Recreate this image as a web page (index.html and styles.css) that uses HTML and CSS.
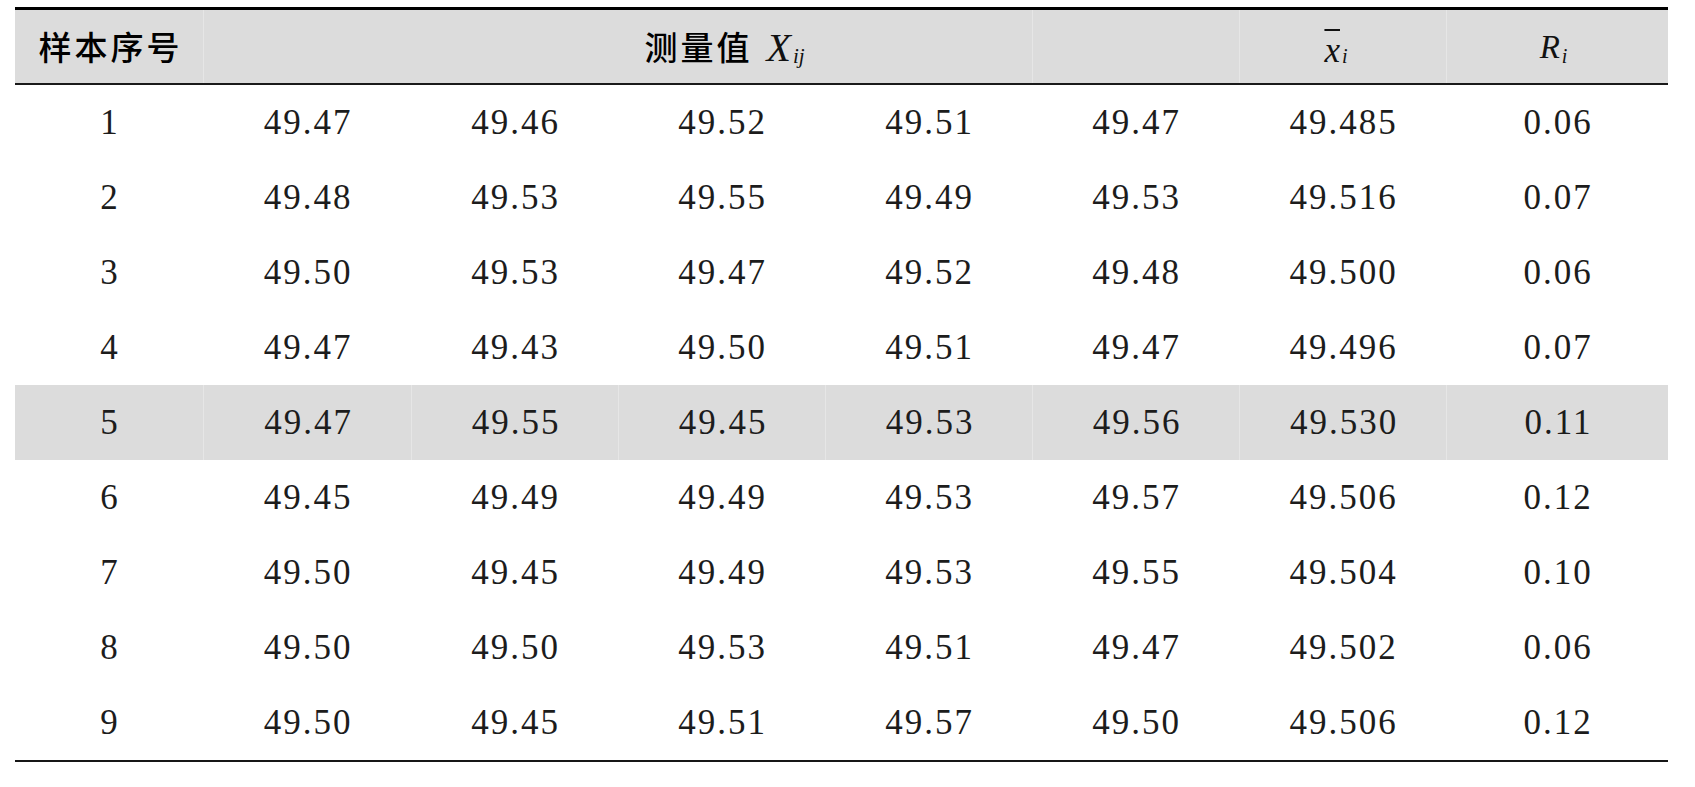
FILE: index.html
```html
<!DOCTYPE html>
<html lang="zh">
<head>
<meta charset="utf-8">
<title>测量值</title>
<link rel="stylesheet" href="styles.css">
</head>
<body>
<div class="table">
  <div class="row head">
    <div class="hc c1 cjk">样本序号</div>
    <div class="hc cspan"><span class="cjk">测量值</span><span class="math big">X</span><span class="math sub">ij</span></div>
    <div class="hc c6 div"></div>
    <div class="hc c7 div"><span class="math xbar">x</span><span class="math sub2">i</span></div>
    <div class="hc c8 div"><span class="math rr">R</span><span class="math sub2">i</span></div>
  </div>
  <div class="row"><div class="cell">1</div><div class="cell">49.47</div><div class="cell">49.46</div><div class="cell">49.52</div><div class="cell">49.51</div><div class="cell">49.47</div><div class="cell">49.485</div><div class="cell">0.06</div></div>
  <div class="row"><div class="cell">2</div><div class="cell">49.48</div><div class="cell">49.53</div><div class="cell">49.55</div><div class="cell">49.49</div><div class="cell">49.53</div><div class="cell">49.516</div><div class="cell">0.07</div></div>
  <div class="row"><div class="cell">3</div><div class="cell">49.50</div><div class="cell">49.53</div><div class="cell">49.47</div><div class="cell">49.52</div><div class="cell">49.48</div><div class="cell">49.500</div><div class="cell">0.06</div></div>
  <div class="row"><div class="cell">4</div><div class="cell">49.47</div><div class="cell">49.43</div><div class="cell">49.50</div><div class="cell">49.51</div><div class="cell">49.47</div><div class="cell">49.496</div><div class="cell">0.07</div></div>
  <div class="row shade"><div class="cell">5</div><div class="cell">49.47</div><div class="cell">49.55</div><div class="cell">49.45</div><div class="cell">49.53</div><div class="cell">49.56</div><div class="cell">49.530</div><div class="cell">0.11</div></div>
  <div class="row"><div class="cell">6</div><div class="cell">49.45</div><div class="cell">49.49</div><div class="cell">49.49</div><div class="cell">49.53</div><div class="cell">49.57</div><div class="cell">49.506</div><div class="cell">0.12</div></div>
  <div class="row"><div class="cell">7</div><div class="cell">49.50</div><div class="cell">49.45</div><div class="cell">49.49</div><div class="cell">49.53</div><div class="cell">49.55</div><div class="cell">49.504</div><div class="cell">0.10</div></div>
  <div class="row"><div class="cell">8</div><div class="cell">49.50</div><div class="cell">49.50</div><div class="cell">49.53</div><div class="cell">49.51</div><div class="cell">49.47</div><div class="cell">49.502</div><div class="cell">0.06</div></div>
  <div class="row"><div class="cell">9</div><div class="cell">49.50</div><div class="cell">49.45</div><div class="cell">49.51</div><div class="cell">49.57</div><div class="cell">49.50</div><div class="cell">49.506</div><div class="cell">0.12</div></div>
</div>
</body>
</html>
```

FILE: styles.css
```css
html, body {
  margin: 0;
  padding: 0;
  background: #ffffff;
}

.table {
  margin: 7px 0 0 15px;
  width: 1653px;
  border-top: 3px solid #000000;
  border-bottom: 2px solid #161616;
}

.row {
  display: grid;
  grid-template-columns: 188px 208px 207px 207px 207px 207px 207px 222px;
  grid-template-rows: 75px;
  box-sizing: border-box;
  height: 75px;
}

.head {
  height: 75px;
  grid-template-rows: 73px;
  background: #dcdcdc;
  border-bottom: 2px solid #1a1a1a;
}

.hc {
  grid-row: 1;
  display: flex;
  align-items: center;
  justify-content: center;
  box-sizing: border-box;
  color: #000;
}

.c1 { grid-column: 1 / 2; }
.cspan { grid-column: 2 / 7; border-left: 1px solid #e6e6e6; padding-left: 6px; }
.c6 { grid-column: 6 / 7; }
.c7 { grid-column: 7 / 8; padding-right: 14px; }
.c8 { grid-column: 8 / 9; padding-right: 8px; }
.div { border-left: 1px solid #e6e6e6; }

.cjk {
  font-family: "Noto Sans CJK SC", "Noto Sans", sans-serif;
  font-size: 33px;
  font-weight: 500;
  letter-spacing: 3px;
  line-height: 1;
}

.c1.cjk { padding-left: 3px; }

.math {
  font-family: "Liberation Serif", "Times New Roman", serif;
  font-style: italic;
  line-height: 1;
  color: #111;
}

.big {
  font-size: 40px;
  margin-left: 14px;
  position: relative;
  top: 1px;
}

.sub {
  font-size: 21px;
  position: relative;
  top: 10px;
  margin-left: 2px;
}

.xbar {
  font-size: 35px;
  text-decoration: overline;
  text-decoration-thickness: 1.5px;
  position: relative;
  top: 4px;
}

.rr {
  font-size: 33px;
  position: relative;
  top: 1px;
}

.sub2 {
  font-size: 20px;
  position: relative;
  top: 9px;
  margin-left: 2px;
}

.cell {
  display: flex;
  align-items: center;
  justify-content: center;
  box-sizing: border-box;
  font-family: "Liberation Serif", "Times New Roman", serif;
  font-size: 35px;
  letter-spacing: 2px;
  color: #1c1c1c;
  line-height: 1;
  padding-left: 2px;
}

.shade {
  background: #dcdcdc;
}

.shade .cell + .cell {
  border-left: 1px solid #e6e6e6;
}
```
